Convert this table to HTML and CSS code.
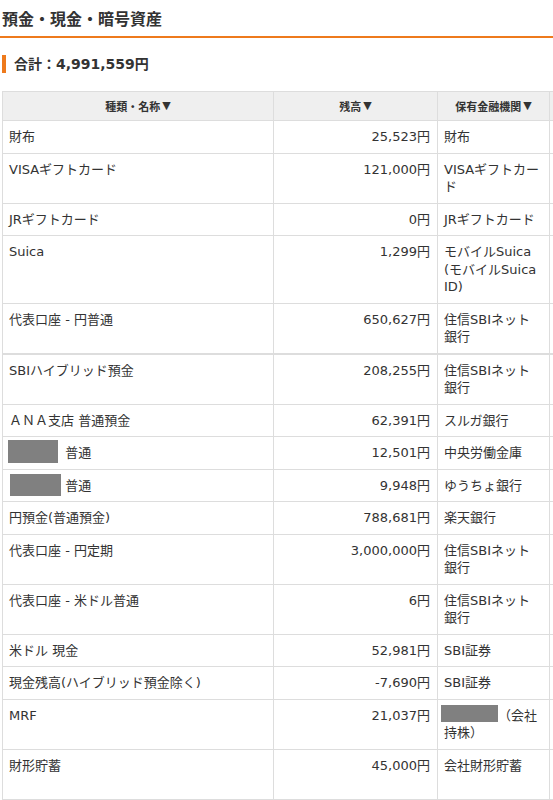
FILE: index.html
```html
<!DOCTYPE html>
<html lang="ja">
<head>
<meta charset="utf-8">
<title>預金・現金・暗号資産</title>
<link rel="stylesheet" href="styles.css">
</head>
<body>
<div class="page">
  <h1 class="title">預金・現金・暗号資産</h1>
  <h2 class="total">合計：4,991,559円</h2>
  <table class="assets">
    <colgroup>
      <col class="c-name"><col class="c-amount"><col class="c-inst"><col class="c-extra">
    </colgroup>
    <thead>
      <tr><th>種類・名称<span class="arrow">▼</span></th><th>残高<span class="arrow">▼</span></th><th>保有金融機関<span class="arrow">▼</span></th><th></th></tr>
    </thead>
    <tbody>
      <tr><td>財布</td><td class="num">25,523円</td><td>財布</td><td></td></tr>
      <tr><td>VISAギフトカード</td><td class="num">121,000円</td><td>VISAギフトカード</td><td></td></tr>
      <tr><td>JRギフトカード</td><td class="num">0円</td><td>JRギフトカード</td><td></td></tr>
      <tr><td>Suica</td><td class="num">1,299円</td><td>モバイルSuica (モバイルSuica ID)</td><td></td></tr>
      <tr class="split"><td>代表口座 - 円普通</td><td class="num">650,627円</td><td>住信SBIネット銀行</td><td></td></tr>
      <tr><td>SBIハイブリッド預金</td><td class="num">208,255円</td><td>住信SBIネット銀行</td><td></td></tr>
      <tr><td>ＡＮＡ支店 普通預金</td><td class="num">62,391円</td><td>スルガ銀行</td><td></td></tr>
      <tr><td><span class="mask m1"></span> 普通</td><td class="num">12,501円</td><td>中央労働金庫</td><td></td></tr>
      <tr><td><span class="mask m2"></span> 普通</td><td class="num">9,948円</td><td>ゆうちょ銀行</td><td></td></tr>
      <tr><td>円預金(普通預金)</td><td class="num">788,681円</td><td>楽天銀行</td><td></td></tr>
      <tr><td>代表口座 - 円定期</td><td class="num">3,000,000円</td><td>住信SBIネット銀行</td><td></td></tr>
      <tr><td>代表口座 - 米ドル普通</td><td class="num">6円</td><td>住信SBIネット銀行</td><td></td></tr>
      <tr><td>米ドル 現金</td><td class="num">52,981円</td><td>SBI証券</td><td></td></tr>
      <tr><td>現金残高(ハイブリッド預金除く)</td><td class="num">-7,690円</td><td>SBI証券</td><td></td></tr>
      <tr><td>MRF</td><td class="num">21,037円</td><td><span class="mask m3"></span>（会社持株）</td><td></td></tr>
      <tr class="tall"><td>財形貯蓄</td><td class="num">45,000円</td><td>会社財形貯蓄</td><td></td></tr>
    </tbody>
  </table>
</div>
</body>
</html>
```
FILE: styles.css
```css
html, body {
  margin: 0;
  padding: 0;
  background: #fff;
  overflow: hidden;
}
body {
  font-family: "DejaVu Sans", "Noto Sans CJK JP", sans-serif;
  color: #333;
}
.page {
  width: 700px;
  padding: 0 0 0 2px;
}
.title {
  margin: 0 0 0 -2px;
  width: 551px;
  padding: 8px 0 7px 2px;
  font-family: "Noto Sans CJK JP", sans-serif;
  font-size: 16px;
  line-height: 21px;
  font-weight: bold;
  color: #333;
  border-bottom: 2px solid #ee7a1c;
}
.total {
  margin: 17px 0 18px 0;
  padding-left: 8px;
  border-left: 4px solid #ee7a1c;
  font-family: "DejaVu Sans", "Noto Sans CJK JP", sans-serif;
  font-size: 14px;
  line-height: 18px;
  font-weight: bold;
  color: #333;
}
.assets {
  border-collapse: collapse;
  table-layout: fixed;
  width: 650px;
  font-size: 13px;
  line-height: 17.5px;
}
.c-name { width: 271px; }
.c-amount { width: 164px; }
.c-inst { width: 112px; }
.c-extra { width: 103px; }
.assets th,
.assets td {
  border: 1px solid #ddd;
  padding: 7px 7px 7px 6px;
  vertical-align: top;
  text-align: left;
}
.assets th {
  background: #efefef;
  text-align: center;
  font-family: "Noto Sans CJK JP", sans-serif;
  font-size: 11px;
  font-weight: bold;
  padding: 5px 6px 5px 6px;
  line-height: 18px;
  height: 18px;
}
.arrow {
  font-family: "DejaVu Sans", sans-serif;
  font-size: 11px;
  line-height: 18px;
  vertical-align: top;
  margin-left: 2px;
}
.assets td.num {
  text-align: right;
}
.assets tr.split td {
  border-bottom: 2px solid #ddd;
}
.assets tr.tall td {
  height: 35px;
}
.mask {
  display: inline-block;
  background: #808080;
  vertical-align: top;
}
.m1 { width: 50px; height: 23px; margin: -4px 3px -2px -1px; }
.m2 { width: 51px; height: 22px; margin: -3px 0 -2px 1px; }
.m3 { width: 57px; height: 17px; margin: -2px 0 0 -3px; }
```
